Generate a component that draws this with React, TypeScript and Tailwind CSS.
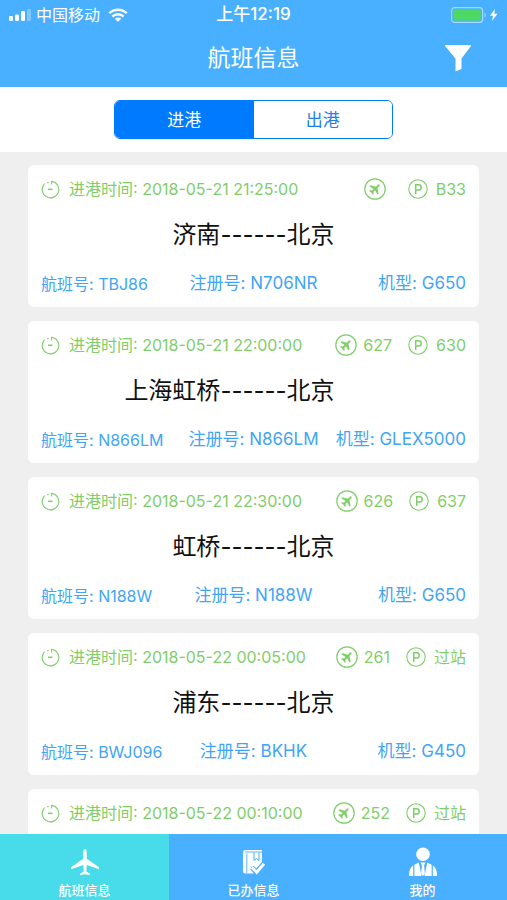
import React, { useState } from 'react';

interface Flight {
  id: number;
  time: string;
  stand: string;
  parking: string;
  from?: string;
  to?: string;
  flightNo?: string;
  regNo?: string;
  model?: string;
}

const flights: Flight[] = [
  { id: 1, time: '2018-05-21 21:25:00', from: '济南', to: '北京', stand: '', parking: 'B33', flightNo: 'TBJ86', regNo: 'N706NR', model: 'G650' },
  { id: 2, time: '2018-05-21 22:00:00', from: '上海虹桥', to: '北京', stand: '627', parking: '630', flightNo: 'N866LM', regNo: 'N866LM', model: 'GLEX5000' },
  { id: 3, time: '2018-05-21 22:30:00', from: '虹桥', to: '北京', stand: '626', parking: '637', flightNo: 'N188W', regNo: 'N188W', model: 'G650' },
  { id: 4, time: '2018-05-22 00:05:00', from: '浦东', to: '北京', stand: '261', parking: '过站', flightNo: 'BWJ096', regNo: 'BKHK', model: 'G450' },
  { id: 5, time: '2018-05-22 00:10:00', stand: '252', parking: '过站' },
];

const ClockIcon = () => (
  <svg viewBox="0 0 20 20" className="h-5 w-5 shrink-0" fill="none" stroke="currentColor" strokeWidth="1.1">
    <path d="M3.600 4.700A8.300 8.300 0 1 0 10.600 2.300V5.600" />
    <path d="M7.700 3.200l-1.500.6" />
    <path d="M7 10.300h4.500" strokeWidth="1.500" />
  </svg>
);

const StandIcon = () => (
  <svg viewBox="0 0 22 22" className="h-[22px] w-[22px] shrink-0">
    <circle cx="11" cy="11" r="10.200" fill="none" stroke="currentColor" strokeWidth="1.200" />
    <path
      d="M12 1c-1.200 0-1.900 1.100-1.900 2.500v4.800L1.500 13.500v2.900l8.600-2.200v4.300L7 21v2l5-1 5 1v-2l-3.100-2.500v-4.300l8.600 2.200v-2.900l-8.600-5.200V3.500C13.900 2.100 13.200 1 12 1z"
      fill="currentColor"
      transform="translate(11 11) rotate(45) scale(.54) translate(-12 -12.500)"
    />
  </svg>
);

const ParkingIcon = () => (
  <svg viewBox="0 0 20 20" className="h-5 w-5 shrink-0" fill="none" stroke="currentColor">
    <circle cx="10" cy="10" r="9.200" strokeWidth="1.100" />
    <path d="M7.700 15V5.700h2.800a2.700 2.700 0 0 1 0 5.400H7.700" strokeWidth="1.500" />
  </svg>
);

const SignalIcon = () => (
  <svg viewBox="0 0 24 12" className="h-3 w-6" fill="currentColor">
    <rect x="1" y="7" width="4" height="5" rx="1.300" />
    <rect x="7" y="5.500" width="4" height="6.500" rx="1.300" />
    <rect x="13" y="2" width="4" height="10" rx="1.300" />
    <rect x="19" y="0" width="4" height="12" rx="1.300" opacity=".3" />
  </svg>
);

const WifiIcon = () => (
  <svg viewBox="0 0 20 14" className="h-[14px] w-5" fill="none" stroke="currentColor" strokeWidth="2.500">
    <path d="M1.300 5.200a12.500 12.500 0 0 1 17.400 0" />
    <path d="M4.400 8.600a8 8 0 0 1 11.200 0" />
    <path d="M10 13.800l-3.200-3.100a4.600 4.600 0 0 1 6.400 0z" fill="currentColor" stroke="none" />
  </svg>
);

const BatteryIcon = () => (
  <svg viewBox="0 0 48 16" className="h-4 w-12">
    <rect x=".6" y=".6" width="31" height="14.800" rx="3" fill="none" stroke="#a5d6ff" strokeWidth="1.200" />
    <rect x="2.500" y="2.500" width="27.200" height="11" rx="1" fill="#4cd964" />
    <path d="M33.500 5.500c1.600.5 1.600 4.500 0 5z" fill="#a5d6ff" />
    <path d="M44 2l-5 6.800h3L41 14l5.500-7.200h-3.200z" fill="#fff" />
  </svg>
);

const FilterIcon = () => (
  <svg viewBox="0 0 26 27" className="h-[27px] w-[26px]" fill="currentColor">
    <path d="M.6 0h24.800c.7 0 .7.700.4 1.200L16.500 13.500V24l-6 2.600V13.500L.2 1.200C-.1.700 0 0 .6 0z" />
  </svg>
);

const PlaneIcon = () => (
  <svg viewBox="0 0 28 28" className="h-7 w-7" fill="currentColor">
    <path d="M14 1c-1 0-1.700 1.300-1.700 2.800v6.900L0 19.300v2l12.300-4.300.4 6.600-3.700 2.200V27l5-.8 5 .8v-1.200l-3.700-2.200.4-6.600L28 21.300v-2l-12.300-8.600V3.800C15.700 2.300 15 1 14 1z" />
  </svg>
);

const BookIcon = () => (
  <svg viewBox="0 0 24 26" className="h-[26px] w-6">
    <path d="M3.500 1H20v23.500H3.500A2.500 2.500 0 0 1 1 22V3.500A2.500 2.500 0 0 1 3.500 1z" fill="#fff" />
    <path d="M3 3h17M4.800 4.500v20" stroke="#49afff" strokeWidth=".9" fill="none" />
    <path d="M12 3.500v8l2.500-2 2.500 2v-8" stroke="#49afff" strokeWidth="1" fill="none" />
    <path d="M8.500 17l6 6.500L24 12.500V26H12z" fill="#49afff" />
    <path d="M9.800 18.500l4.700 4.500 8-9" stroke="#49afff" strokeWidth="5" fill="none" />
    <path d="M10 18.500l4.700 4.700 7.300-8.400" stroke="#fff" strokeWidth="3" fill="none" />
  </svg>
);

const PersonIcon = () => (
  <svg viewBox="0 0 28 30" className="h-[30px] w-7" fill="currentColor">
    <circle cx="14" cy="7.300" r="6.800" />
    <path d="M0 29c0-5 1.200-8.800 4.200-10.500V29z" />
    <path d="M28 29c0-5-1.200-8.800-4.200-10.500V29z" />
    <path d="M5.400 17.800l4.400-2.200L12.500 29H5.400z" />
    <path d="M22.600 17.800l-4.400-2.200L15.500 29h7.100z" />
    <path d="M11.500 15.500h5l-1.400 3 .8 8.500-1.900 2-1.900-2 .8-8.500z" />
  </svg>
);

const FlightCard: React.FC<{ flight: Flight }> = ({ flight }) => (
  <li className="min-h-[142px] shrink-0 rounded-md bg-white px-[13px] py-3">
    <div className="flex h-6 items-center justify-between text-base text-[#7fce69]">
      <div className="flex items-center gap-2">
        <ClockIcon />
        <span className="whitespace-nowrap">进港时间: {flight.time}</span>
      </div>
      <div className="flex items-center gap-4">
        <div className="flex items-center gap-1.5">
          <StandIcon />
          <span>{flight.stand}</span>
        </div>
        <div className="flex items-center gap-2">
          <ParkingIcon />
          <span>{flight.parking}</span>
        </div>
      </div>
    </div>
    {flight.from && (
      <>
        <h2 className="mt-[18px] grid h-8 grid-cols-[1fr_auto_1fr] items-center text-2xl text-[#111111]">
          <span className="text-right">{flight.from}</span>
          <span>------</span>
          <span>{flight.to}</span>
        </h2>
        <div className="mt-5 grid h-6 grid-cols-[1fr_auto_1fr] items-center text-[17px] whitespace-nowrap text-[#41a5f5]">
          <span className="text-base">航班号: {flight.flightNo}</span>
          <span>注册号: {flight.regNo}</span>
          <span className="text-right">机型: {flight.model}</span>
        </div>
      </>
    )}
  </li>
);

const tabs = [
  { label: '航班信息', icon: <PlaneIcon /> },
  { label: '已办信息', icon: <BookIcon /> },
  { label: '我的', icon: <PersonIcon /> },
];

const App: React.FC = () => {
  const [direction, setDirection] = useState('进港');
  const [tab, setTab] = useState('航班信息');

  return (
    <div className="flex h-screen flex-col bg-[#efefef] font-['Inter','Noto_Sans_CJK_SC',sans-serif]">
      <header className="bg-[#49afff] text-white">
        <div className="grid h-[30px] grid-cols-[1fr_auto_1fr] items-center px-2 text-base">
          <div className="flex items-center gap-1">
            <SignalIcon />
            <span>中国移动</span>
            <span className="ml-1"><WifiIcon /></span>
          </div>
          <span className="text-[17px] font-medium">上午12:19</span>
          <div className="flex justify-end">
            <BatteryIcon />
          </div>
        </div>
        <div className="grid h-[57px] grid-cols-[1fr_auto_1fr] items-center pr-9">
          <h1 className="col-start-2 pl-9 text-[23px]">航班信息</h1>
          <button aria-label="筛选" className="justify-self-end">
            <FilterIcon />
          </button>
        </div>
      </header>

      <div className="flex justify-center bg-white py-[13px]">
        <div className="grid h-[39px] w-[55%] grid-cols-2 overflow-hidden rounded-md border border-[#007aff] text-[17px]">
          {['进港', '出港'].map((name) => (
            <button
              key={name}
              onClick={() => setDirection(name)}
              className={`pt-[3px] ${direction === name ? 'bg-[#007aff] text-white' : 'bg-white text-[#1f80ea]'}`}
            >
              {name}
            </button>
          ))}
        </div>
      </div>

      <ul className="flex min-h-0 flex-1 flex-col gap-[14px] overflow-y-auto px-7 pt-[13px] [scrollbar-width:none]">
        {flights.map((flight) => (
          <FlightCard key={flight.id} flight={flight} />
        ))}
      </ul>

      <nav className="grid h-[66px] shrink-0 grid-cols-3 bg-[#49afff] text-white">
        {tabs.map(({ label, icon }) => (
          <button
            key={label}
            onClick={() => setTab(label)}
            className={`flex flex-col items-center justify-end ${tab === label ? 'bg-[#48dbea]' : ''}`}
          >
            <span className="flex h-9 items-center">{icon}</span>
            <span className="text-[13px] leading-5 font-medium">{label}</span>
          </button>
        ))}
      </nav>
    </div>
  );
};

export default App;
